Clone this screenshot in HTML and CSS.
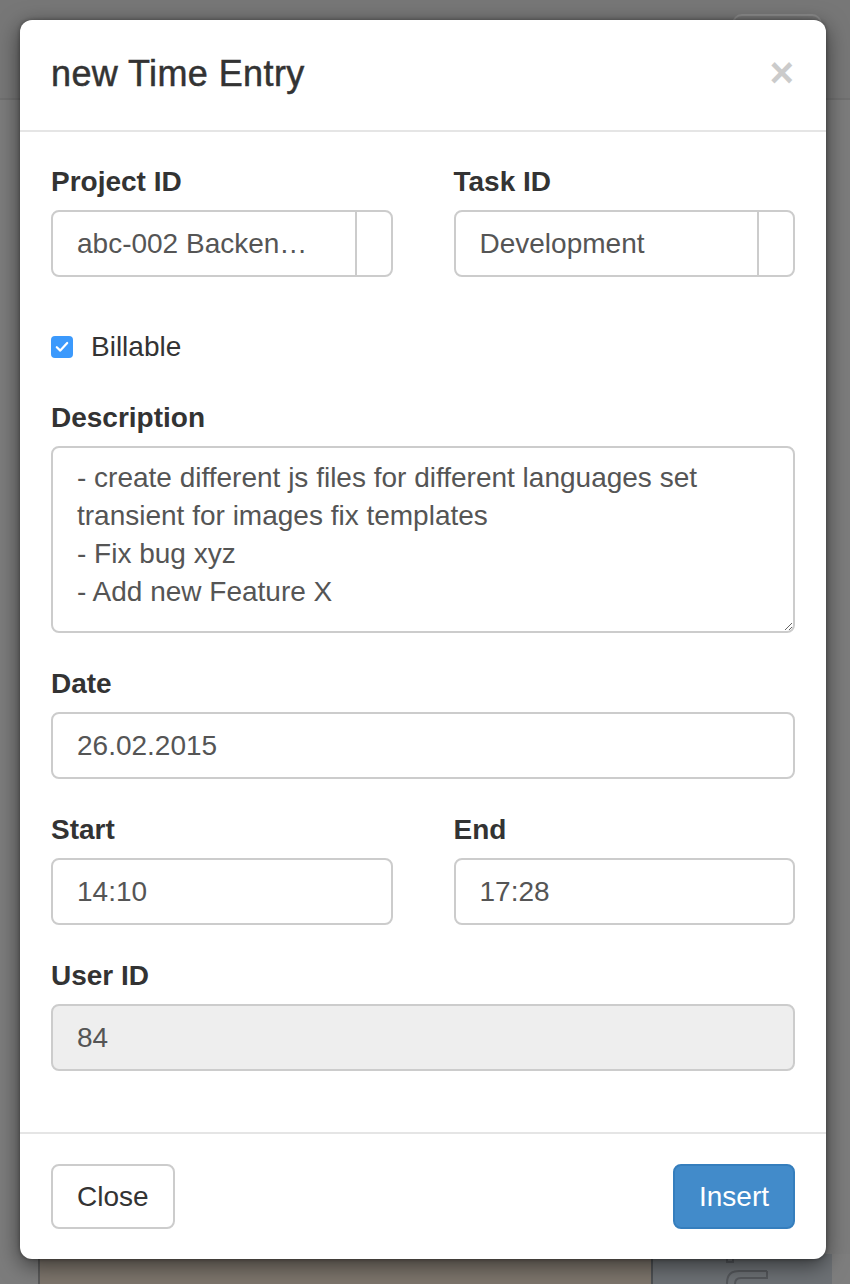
FILE: index.html
```html
<!DOCTYPE html>
<html lang="en">
<head>
<meta charset="utf-8">
<title>new Time Entry</title>
<link rel="stylesheet" href="styles.css">
</head>
<body>
<div class="page">
  <div class="navbar">
    <div class="nav-btn"></div>
  </div>
  <div class="main">
    <div class="bottom-row">
      <div class="panel-brown"></div>
      <div class="panel-dark">
        <svg class="ghost-icon" width="60" height="30" viewBox="0 0 60 30">
          <rect x="2" y="0" width="6" height="6" fill="none" stroke="#55585c" stroke-width="2"/>
          <path d="M 42 15 H 14 Q 2 15 2 27 V 30 M 42 15 V 22 H 16 Q 10 22 10 28 V 30" fill="none" stroke="#55585c" stroke-width="2"/>
        </svg>
      </div>
      <div class="panel-edge"></div>
    </div>
  </div>
</div>

<div class="modal">
  <div class="modal-header">
    <h4 class="modal-title">new Time Entry</h4>
    <span class="close">×</span>
  </div>
  <div class="modal-body">
    <div class="row">
      <div class="form-group">
        <label class="label">Project ID</label>
        <div class="select"><span class="select-text">abc-002 Backen…</span><span class="select-caret"></span></div>
      </div>
      <div class="form-group">
        <label class="label">Task ID</label>
        <div class="select"><span class="select-text">Development</span><span class="select-caret"></span></div>
      </div>
    </div>
    <div class="form-group">
      <div class="checkbox">
        <span class="check-box">
          <svg width="14" height="12" viewBox="0 0 14 12"><path d="M1.8 6.2 L5.3 9.6 L12.2 2" fill="none" stroke="#fff" stroke-width="2.2" stroke-linecap="round" stroke-linejoin="round"/></svg>
        </span>
        <span class="check-label">Billable</span>
      </div>
    </div>
    <div class="form-group">
      <label class="label">Description</label>
      <textarea class="textarea" rows="4">- create different js files for different languages set transient for images fix templates
- Fix bug xyz
- Add new Feature X</textarea>
    </div>
    <div class="form-group">
      <label class="label">Date</label>
      <div class="input">26.02.2015</div>
    </div>
    <div class="row">
      <div class="form-group">
        <label class="label">Start</label>
        <div class="input">14:10</div>
      </div>
      <div class="form-group">
        <label class="label">End</label>
        <div class="input">17:28</div>
      </div>
    </div>
    <div class="form-group">
      <label class="label">User ID</label>
      <div class="input input-disabled">84</div>
    </div>
  </div>
  <div class="modal-footer">
    <button class="btn btn-default">Close</button>
    <button class="btn btn-primary">Insert</button>
  </div>
</div>
</body>
</html>
```

FILE: styles.css
```css
* { box-sizing: border-box; }

html, body {
  margin: 0;
  padding: 0;
}

body {
  width: 850px;
  height: 1284px;
  overflow: hidden;
  background: #7b7b7b;
  font-family: "Liberation Sans", Arial, Helvetica, sans-serif;
  color: #333;
  position: relative;
}

/* background page (dimmed) */
.page {
  height: 1284px;
  display: flex;
  flex-direction: column;
}

.navbar {
  height: 100px;
  flex: none;
  background: #777;
  border-bottom: 2px solid #707070;
  padding: 14px 0 0 732px;
}

.nav-btn {
  width: 90px;
  height: 60px;
  border: 2px solid #8a8a8a;
  border-radius: 10px;
}

.main {
  flex: 1;
  display: flex;
  flex-direction: column;
  justify-content: flex-end;
  background: #7c7c7c;
}

.bottom-row {
  height: 30px;
  display: flex;
}

.panel-brown {
  margin-left: 38px;
  width: 615px;
  background: #7d756c;
  border-left: 2px solid #5a5a5a;
  border-right: 2px solid #4e5154;
}

.panel-dark {
  width: 179px;
  background: #6d7175;
  padding: 2px 0 0 72px;
}

.ghost-icon { display: block; }

.panel-edge {
  flex: 1;
  background: #7e7e7e;
}

/* modal */
.modal {
  position: absolute;
  left: 20px;
  top: 20px;
  width: 806px;
  background: #fff;
  border-radius: 12px;
  box-shadow: 0 6px 22px rgba(0, 0, 0, 0.55), 0 0 4px rgba(0, 0, 0, 0.35);
}

.modal-header {
  height: 112px;
  padding: 30px 31px 0 31px;
  border-bottom: 2px solid #e5e5e5;
  display: flex;
  justify-content: space-between;
  align-items: flex-start;
}

.modal-title {
  margin: 0;
  font-size: 36px;
  line-height: 48px;
  font-weight: 500;
  color: #333;
  letter-spacing: 0.4px;
  -webkit-text-stroke: 0.5px #333;
}

.close {
  font-size: 42px;
  line-height: 48px;
  font-weight: bold;
  color: #000;
  opacity: 0.2;
  margin-top: -1px;
  margin-right: 1px;
}

.modal-body {
  padding: 30px 31px 30px 31px;
}

.row {
  display: flex;
  gap: 61px;
}

.row > .form-group {
  flex: 1;
}

.form-group {
  margin-bottom: 31px;
}

.label {
  display: block;
  font-size: 28px;
  line-height: 40px;
  font-weight: bold;
  color: #333;
  margin-bottom: 8px;
}

.input,
.select {
  height: 67px;
  border: 2px solid #ccc;
  border-radius: 8px;
  font-size: 28px;
  color: #555;
  background: #fff;
}

.input {
  padding: 0 24px;
  line-height: 63px;
}

.input-disabled {
  background: #eee;
}

.select {
  display: flex;
}

.select-text {
  flex: 1;
  padding: 0 24px;
  line-height: 63px;
  white-space: nowrap;
  overflow: hidden;
}

.select-caret {
  width: 36px;
  border-left: 2px solid #ccc;
}

.checkbox {
  margin-top: 19px;
  height: 40px;
  display: flex;
  align-items: center;
  gap: 18px;
}

.check-box {
  width: 22px;
  height: 22px;
  border-radius: 4px;
  background: #3b99fc;
  display: flex;
  align-items: center;
  justify-content: center;
}

.check-box svg { display: block; }

.check-label {
  font-size: 28px;
  line-height: 40px;
  color: #333;
}

.textarea {
  display: block;
  width: 100%;
  height: 187px;
  margin: 0;
  border: 2px solid #ccc;
  border-radius: 8px;
  padding: 11px 24px 19px 24px;
  font-family: "Liberation Sans", Arial, Helvetica, sans-serif;
  font-size: 28px;
  line-height: 38px;
  color: #555;
  background: #fff;
  resize: vertical;
  overflow: hidden;
  outline: none;
}

.modal-footer {
  border-top: 2px solid #e5e5e5;
  padding: 30px 31px;
  display: flex;
  justify-content: space-between;
}

.btn {
  height: 65px;
  padding: 0 24px;
  border-radius: 8px;
  font-family: "Liberation Sans", Arial, Helvetica, sans-serif;
  font-size: 28px;
  line-height: 61px;
  cursor: pointer;
}

.btn-default {
  background: #fff;
  border: 2px solid #ccc;
  color: #333;
}

.btn-primary {
  background: #428bca;
  border: 2px solid #357ebd;
  color: #fff;
  padding: 0 24px;
}
```
